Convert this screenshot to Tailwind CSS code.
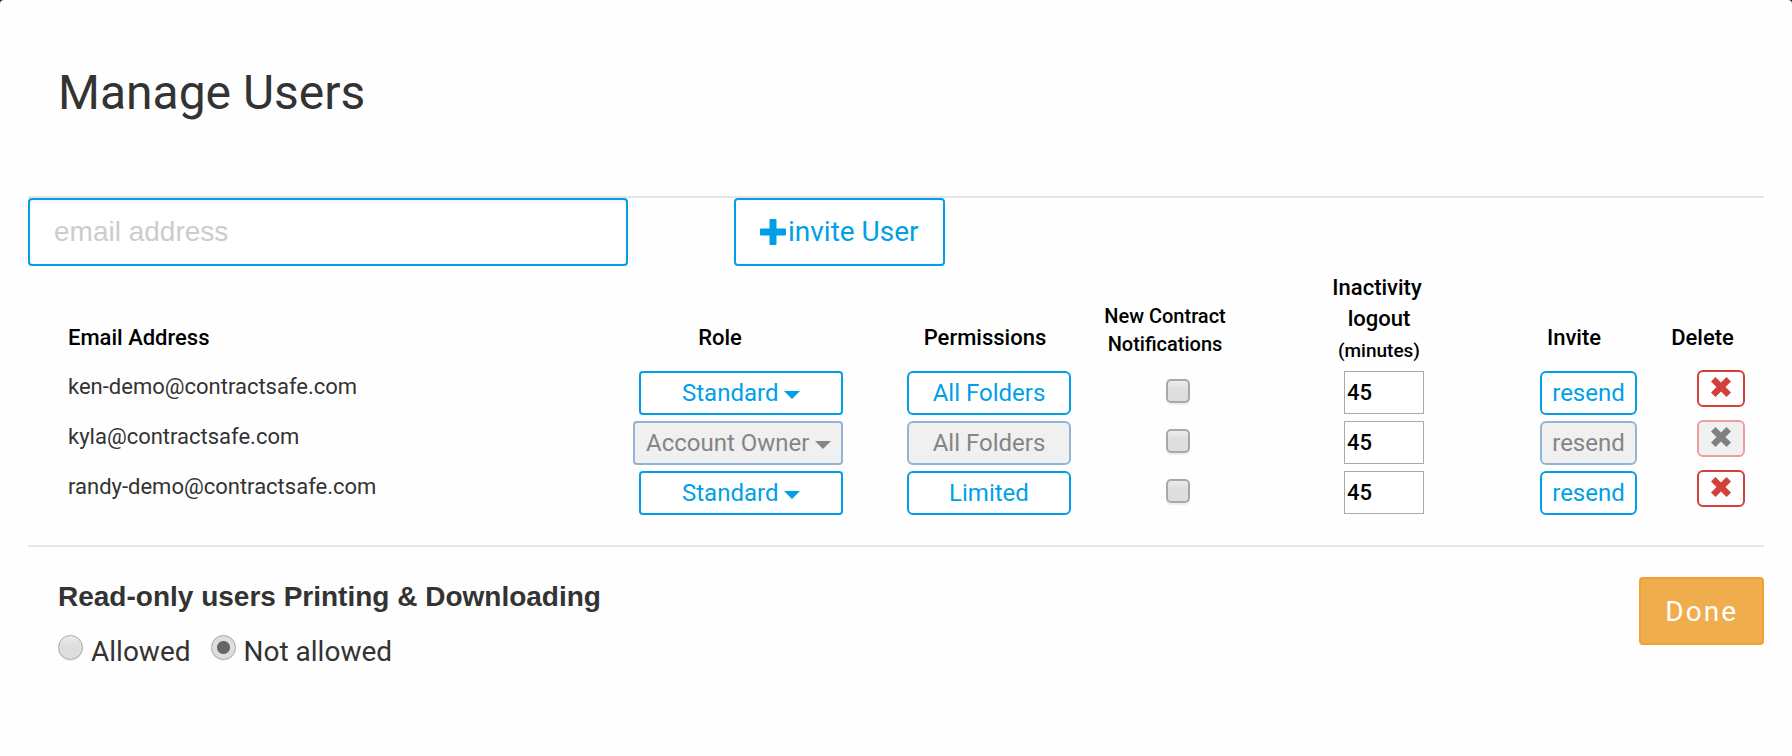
<!DOCTYPE html>
<html lang="en">
<head>
  <meta charset="UTF-8">
  <meta name="viewport" content="width=device-width, initial-scale=1.0">
  <title>Manage Users</title>
  <script src="https://cdn.jsdelivr.net/npm/@tailwindcss/browser@4"></script>
</head>
<body class="bg-[#222222] font-['Roboto',sans-serif] text-[#333333]">
  <main class="min-h-screen bg-[#fefefe] rounded-t-sm px-7 pt-16">
    <h1 class="pl-[30px] text-5xl leading-[58px]">Manage Users</h1>

    <!-- invite form -->
    <form class="mt-[74px] border-t-2 border-[#e5e5e5] flex gap-[106px]">
      <input type="email" aria-label="email address" placeholder="email address" class="w-[600px] h-[68px] px-6 border-2 border-[#009fe8] rounded-sm bg-white font-['Liberation_Sans',sans-serif] text-[28px] placeholder:text-[#cccccc] inset-shadow-sm outline-none">
      <button type="button" class="h-[68px] px-6 flex items-center border-2 border-[#009fe8] rounded-sm bg-white text-[28px] leading-[44px] text-[#009fe8]">
        <svg class="w-[26px] h-[26px] mr-[2px]" viewBox="0 0 26 26" fill="currentColor"><path d="M10.500 0h5a1 1 0 0 1 1 1v8.500H25a1 1 0 0 1 1 1v5a1 1 0 0 1-1 1h-8.500V25a1 1 0 0 1-1 1h-5a1 1 0 0 1-1-1v-8.500H1a1 1 0 0 1-1-1v-5a1 1 0 0 1 1-1h8.500V1a1 1 0 0 1 1-1z"/></svg>
        invite User
      </button>
    </form>

    <table class="w-full table-fixed">
      <colgroup>
        <col>
        <col class="w-[246px]">
        <col class="w-[228px]">
        <col class="w-[188px]">
        <col class="w-[236px]">
        <col class="w-[142px]">
        <col class="w-[127px]">
      </colgroup>
      <thead class="align-bottom text-black text-[22px] leading-[31px]">
        <tr>
          <th class="pl-10 pb-[17px] text-left font-medium">Email Address</th>
          <th class="pb-[17px] font-medium">Role</th>
          <th class="pl-14 pb-[17px] font-medium">Permissions</th>
          <th class="pb-3 font-medium text-xl leading-7">New Contract<br>Notifications</th>
          <th class="pt-[6px] pb-1 font-medium">Inactivity<br><span class="pl-1">logout</span><br><span class="pl-1 text-[19px] leading-[31px]">(minutes)</span></th>
          <th class="pl-4 pb-[17px] font-medium">Invite</th>
          <th class="pl-1 pb-[17px] font-medium">Delete</th>
        </tr>
      </thead>
      <tbody class="align-top text-2xl">
        <tr class="h-[50px]">
          <td class="pl-10 text-[22px] leading-[34px]">ken-demo@contractsafe.com</td>
          <td class="pt-px">
            <div class="relative w-[204px] ml-auto text-[#009fe8]">
              <select aria-label="Role of ken-demo" class="block appearance-none w-full h-11 pl-[41px] border-2 border-[#009fe8] rounded-sm bg-white">
                <option>Standard</option>
                <option>Account Owner</option>
              </select>
              <svg class="absolute right-[43px] top-5 w-4 h-2 pointer-events-none" viewBox="0 0 16 8" fill="currentColor"><path d="M0 0h16L8 8z"/></svg>
            </div>
          </td>
          <td class="pt-px"><button type="button" class="block ml-auto w-[164px] h-11 border-2 border-[#009fe8] rounded-md bg-white text-[#009fe8]">All Folders</button></td>
          <td class="pt-[9px] pl-[26px]"><input type="checkbox" aria-label="New contract notifications for ken-demo" class="block mx-auto appearance-none size-6 border-2 border-[#a8a8a8] rounded-[5px] bg-linear-to-b from-[#ededed] to-[#dedede] to-40% shadow-[0_2px_1px_#eeeeee]"></td>
          <td class="pt-px pl-[14px]"><input type="text" value="45" aria-label="Inactivity logout for ken-demo" class="block mx-auto w-20 h-[43px] px-[2px] border border-[#a9a9a9] bg-white text-black text-[22px] font-medium"></td>
          <td class="pt-px"><button type="button" class="block ml-auto w-[97px] h-11 border-2 border-[#009fe8] rounded-md bg-white text-[#009fe8]">resend</button></td>
          <td class="pr-[19px]">
            <button type="button" aria-label="Delete ken-demo" class="flex justify-center ml-auto w-12 h-[37px] pt-[5px] border-2 border-[#d43f3a] rounded-md bg-white text-[#d43f3a]">
              <svg class="size-5" viewBox="0 0 20 20" fill="currentColor"><path d="M4.500 0L10 5.500 15.500 0 20 4.500 14.500 10 20 15.500 15.500 20 10 14.500 4.500 20 0 15.500 5.500 10 0 4.500z"/></svg>
            </button>
          </td>
        </tr>
        <tr class="h-[50px]">
          <td class="pl-10 text-[22px] leading-[34px]">kyla@contractsafe.com</td>
          <td class="pt-px">
            <div class="relative w-[210px] ml-auto text-[#858585]">
              <select disabled aria-label="Role of kyla" class="block appearance-none w-full h-11 pl-[11px] border-2 border-[#93b5d3] rounded-sm bg-[#f0f0f0] opacity-100">
                <option>Account Owner</option>
              </select>
              <svg class="absolute right-3 top-5 w-4 h-2 pointer-events-none" viewBox="0 0 16 8" fill="currentColor"><path d="M0 0h16L8 8z"/></svg>
            </div>
          </td>
          <td class="pt-px"><button type="button" disabled class="block ml-auto w-[164px] h-11 border-2 border-[#93b5d3] rounded-md bg-[#f0f0f0] text-[#858585]">All Folders</button></td>
          <td class="pt-[9px] pl-[26px]"><input type="checkbox" aria-label="New contract notifications for kyla" class="block mx-auto appearance-none size-6 border-2 border-[#a8a8a8] rounded-[5px] bg-linear-to-b from-[#ededed] to-[#dedede] to-40% shadow-[0_2px_1px_#eeeeee]"></td>
          <td class="pt-px pl-[14px]"><input type="text" value="45" aria-label="Inactivity logout for kyla" class="block mx-auto w-20 h-[43px] px-[2px] border border-[#a9a9a9] bg-white text-black text-[22px] font-medium"></td>
          <td class="pt-px"><button type="button" disabled class="block ml-auto w-[97px] h-11 border-2 border-[#93b5d3] rounded-md bg-[#f0f0f0] text-[#858585]">resend</button></td>
          <td class="pr-[19px]">
            <button type="button" disabled aria-label="Delete kyla" class="flex justify-center ml-auto w-12 h-[37px] pt-[5px] border-2 border-[#eb9f9c] rounded-md bg-[#f0f0f0] text-[#808080]">
              <svg class="size-5" viewBox="0 0 20 20" fill="currentColor"><path d="M4.500 0L10 5.500 15.500 0 20 4.500 14.500 10 20 15.500 15.500 20 10 14.500 4.500 20 0 15.500 5.500 10 0 4.500z"/></svg>
            </button>
          </td>
        </tr>
        <tr class="h-[50px]">
          <td class="pl-10 text-[22px] leading-[34px]">randy-demo@contractsafe.com</td>
          <td class="pt-px">
            <div class="relative w-[204px] ml-auto text-[#009fe8]">
              <select aria-label="Role of randy-demo" class="block appearance-none w-full h-11 pl-[41px] border-2 border-[#009fe8] rounded-sm bg-white">
                <option>Standard</option>
                <option>Account Owner</option>
              </select>
              <svg class="absolute right-[43px] top-5 w-4 h-2 pointer-events-none" viewBox="0 0 16 8" fill="currentColor"><path d="M0 0h16L8 8z"/></svg>
            </div>
          </td>
          <td class="pt-px"><button type="button" class="block ml-auto w-[164px] h-11 border-2 border-[#009fe8] rounded-md bg-white text-[#009fe8]">Limited</button></td>
          <td class="pt-[9px] pl-[26px]"><input type="checkbox" aria-label="New contract notifications for randy-demo" class="block mx-auto appearance-none size-6 border-2 border-[#a8a8a8] rounded-[5px] bg-linear-to-b from-[#ededed] to-[#dedede] to-40% shadow-[0_2px_1px_#eeeeee]"></td>
          <td class="pt-px pl-[14px]"><input type="text" value="45" aria-label="Inactivity logout for randy-demo" class="block mx-auto w-20 h-[43px] px-[2px] border border-[#a9a9a9] bg-white text-black text-[22px] font-medium"></td>
          <td class="pt-px"><button type="button" class="block ml-auto w-[97px] h-11 border-2 border-[#009fe8] rounded-md bg-white text-[#009fe8]">resend</button></td>
          <td class="pr-[19px]">
            <button type="button" aria-label="Delete randy-demo" class="flex justify-center ml-auto w-12 h-[37px] pt-[5px] border-2 border-[#d43f3a] rounded-md bg-white text-[#d43f3a]">
              <svg class="size-5" viewBox="0 0 20 20" fill="currentColor"><path d="M4.500 0L10 5.500 15.500 0 20 4.500 14.500 10 20 15.500 15.500 20 10 14.500 4.500 20 0 15.500 5.500 10 0 4.500z"/></svg>
            </button>
          </td>
        </tr>
      </tbody>
    </table>

    <!-- footer -->
    <footer class="mt-[25px] border-t-2 border-[#e5e5e5] pt-[30px] flex justify-between items-start">
      <fieldset class="pl-[30px]">
        <legend class="font-['Liberation_Sans',sans-serif] text-[28px] leading-10 font-bold">Read-only users Printing &amp; Downloading</legend>
        <div class="mt-[14px] flex gap-5 text-[28px] leading-[42px]">
          <label class="flex gap-2">
            <input type="radio" name="printing" class="appearance-none size-[25px] mt-1 rounded-full border border-[#a8a8a8] bg-linear-to-b from-[#ededed] to-[#dedede] to-40% shadow-[0_1px_1px_#eeeeee]">
            Allowed
          </label>
          <label class="flex gap-2">
            <input type="radio" name="printing" checked class="appearance-none size-[25px] mt-1 rounded-full border border-[#a8a8a8] shadow-[0_1px_1px_#eeeeee] bg-[radial-gradient(circle,#666666_6px,#dedede_7px)]">
            Not allowed
          </label>
        </div>
      </fieldset>
      <button type="button" class="h-[68px] px-6 pt-[2px] border-2 border-[#eea236] rounded-sm bg-[#f0ad4e] text-[28px] text-white tracking-[2px]">Done</button>
    </footer>
  </main>
</body>
</html>
